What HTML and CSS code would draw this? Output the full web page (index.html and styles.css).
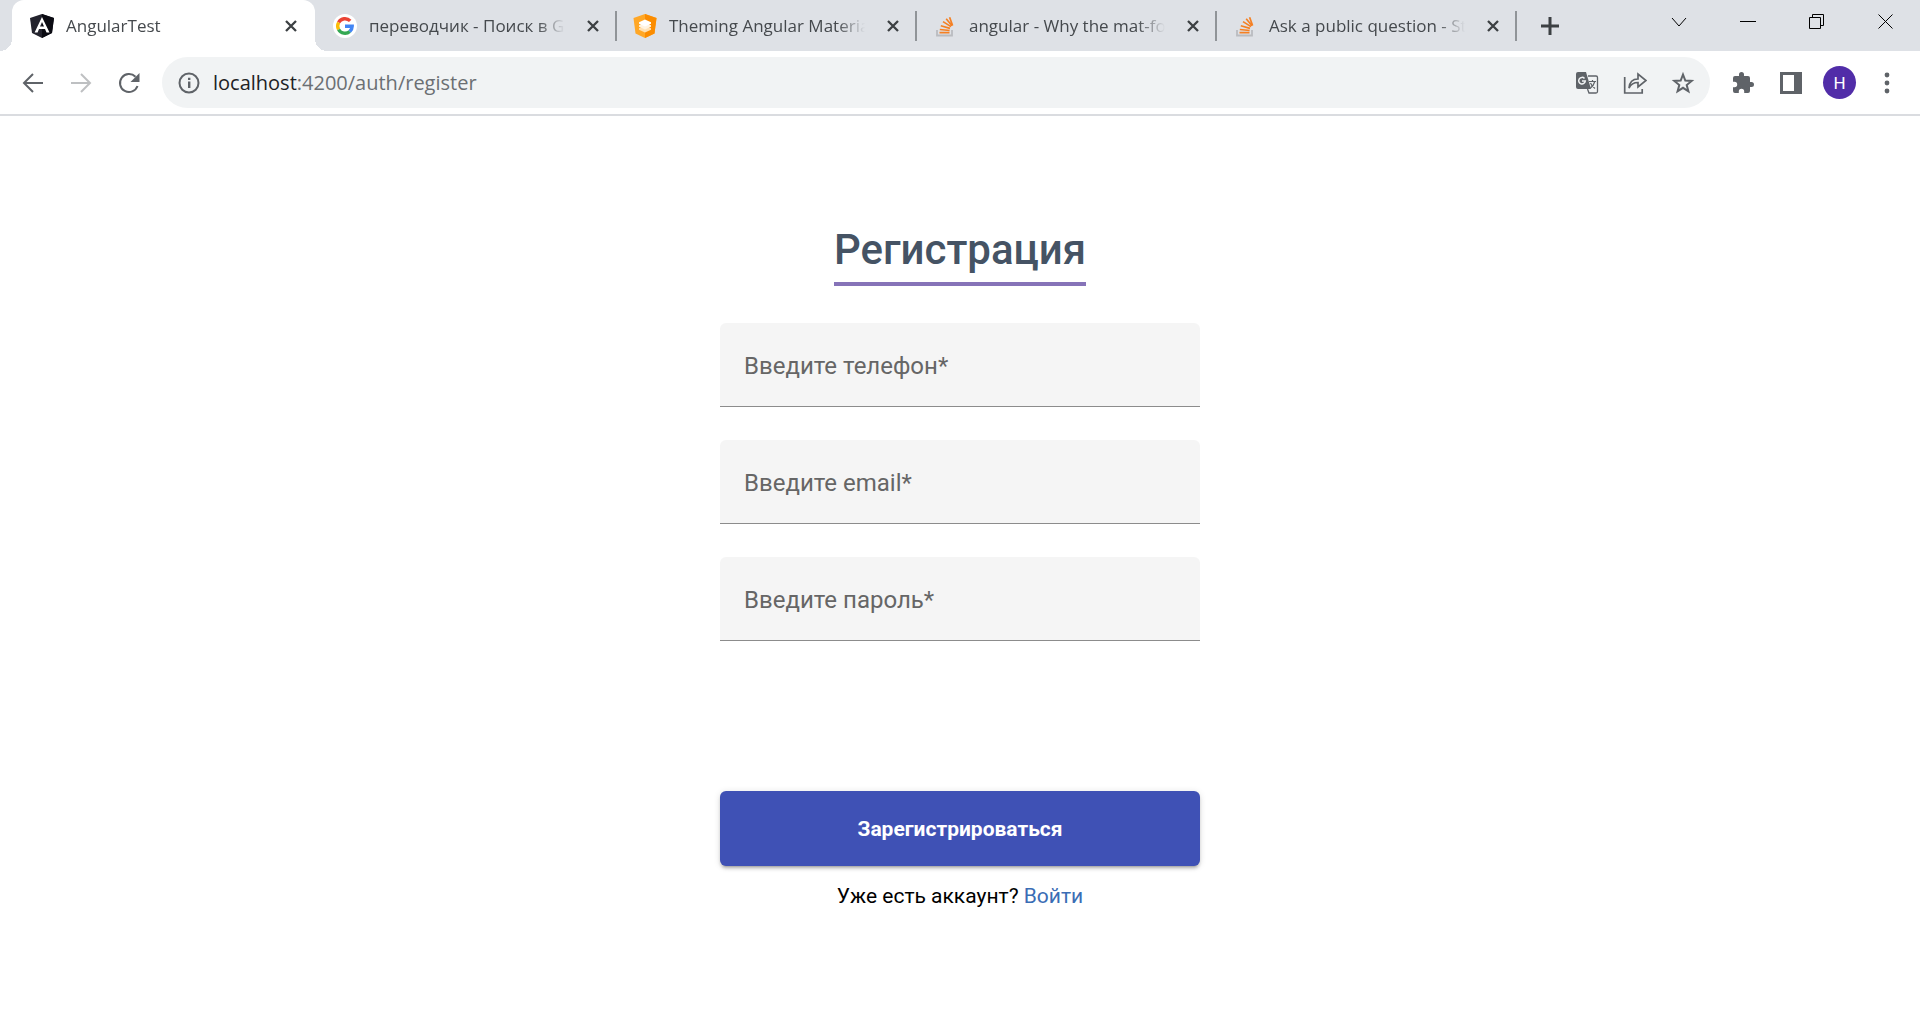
FILE: index.html
```html
<!DOCTYPE html>
<html lang="ru">
<head>
    <meta charset="utf-8">
    <title>AngularTest</title>
    <link rel="stylesheet" href="styles.css">
</head>
<body>
<svg class="sprite" aria-hidden="true">
    <symbol id="close" viewBox="0 0 12 12">
        <path d="M1 1l10 10M11 1L1 11" fill="none" stroke="#3c4043" stroke-width="2.3"/>
    </symbol>
    <symbol id="stack" viewBox="0 0 24 24">
        <path d="M4 16v5.500h15V16" fill="none" stroke="#babcc0" stroke-width="1.8"/>
        <path d="M6.500 18.700h10M6.800 15.500l9.800 1M7.800 11.700l9.200 2.700M10 7.600l8 5M13.200 4.800l5.800 7M16.600 3.200l3 8.400" fill="none" stroke="#f48024" stroke-width="1.7"/>
    </symbol>
</svg>

<header class="browser">
    <div class="tab-strip">
        <div class="tab active">
            <svg class="favicon" viewBox="0 0 24 24">
                <path d="M12 0l12 4-2 15-10 5-10-5L0 4z" fill="#23232d"/>
                <path d="M12 0l12 4-2 15-10 5z" fill="#0b0b12"/>
                <path d="M12 3L4.600 18.500h3l1.400-3.600h6l1.500 3.600h3zM12 8l2 4.600h-4z" fill="#fff" fill-rule="evenodd"/>
            </svg>
            <span class="tab-title">AngularTest</span>
            <button class="tab-close" aria-label="Закрыть"><svg><use href="#close"/></svg></button>
        </div>
        <div class="tab">
            <svg class="favicon" viewBox="0 0 24 24">
                <circle cx="12" cy="12" r="12" fill="#fff"/>
                <g fill="none" stroke-width="3.4">
                    <path d="M17.200 6.900A7.300 7.300 0 0 0 5.600 8.500" stroke="#ea4335"/>
                    <path d="M5.600 8.500a7.300 7.300 0 0 0 0 7" stroke="#fbbc05"/>
                    <path d="M5.600 15.500a7.300 7.300 0 0 0 11.200 2" stroke="#34a853"/>
                    <path d="M16.800 17.500a7.300 7.300 0 0 0 2.400-5.300H12" stroke="#4285f4"/>
                </g>
            </svg>
            <span class="tab-title">переводчик - Поиск в Google</span>
            <button class="tab-close" aria-label="Закрыть"><svg><use href="#close"/></svg></button>
        </div>
        <div class="tab">
            <svg class="favicon" viewBox="0 0 24 24">
                <path d="M12 0l11.500 4-2 15.500L12 24l-9.500-4.500L.5 4z" fill="#ffa726"/>
                <path d="M12 0l11.500 4-2 15.500L12 24z" fill="#fb8c00"/>
                <path d="M12 11.500l6 2.700v1.600L12 18.500l-6-2.700v-1.600z" fill="#ffe0b2"/>
                <path d="M12 8.500l6 2.700v1.600L12 15.500l-6-2.700v-1.600z" fill="#fff3e0"/>
                <path d="M12 5.500l6 2.700v1.600L12 12.500 6 9.800V8.200z" fill="#fff"/>
            </svg>
            <span class="tab-title">Theming Angular Material</span>
            <button class="tab-close" aria-label="Закрыть"><svg><use href="#close"/></svg></button>
        </div>
        <div class="tab">
            <svg class="favicon"><use href="#stack"/></svg>
            <span class="tab-title">angular - Why the mat-form-field</span>
            <button class="tab-close" aria-label="Закрыть"><svg><use href="#close"/></svg></button>
        </div>
        <div class="tab">
            <svg class="favicon"><use href="#stack"/></svg>
            <span class="tab-title">Ask a public question - Stack Overflow</span>
            <button class="tab-close" aria-label="Закрыть"><svg><use href="#close"/></svg></button>
        </div>
        <button class="new-tab" aria-label="Новая вкладка">
            <svg width="18" height="18" viewBox="0 0 18 18"><path d="M9 0v18M0 9h18" stroke="#3c4043" stroke-width="3"/></svg>
        </button>
        <div class="window-buttons">
            <button aria-label="Поиск вкладок"><svg viewBox="0 0 16 16"><path d="M1 4l7 8 7-8"/></svg></button>
            <button aria-label="Свернуть"><svg viewBox="0 0 16 16"><path d="M0 7.500h16"/></svg></button>
            <button aria-label="Восстановить"><svg viewBox="0 0 16 16"><path d="M.5 3.500h11v11H.5zM3.500 3.500v-3h11v11h-3"/></svg></button>
            <button aria-label="Закрыть окно"><svg viewBox="0 0 16 16"><path d="M.5.5l14 14M14.500.5l-14 14"/></svg></button>
        </div>
    </div>

    <div class="toolbar">
        <button class="tool" aria-label="Назад"><svg viewBox="0 0 24 24"><path class="line" d="M22 12H4M12 3l-9 9 9 9"/></svg></button>
        <button class="tool disabled" aria-label="Вперёд" disabled><svg viewBox="0 0 24 24"><path class="line" d="M2 12h18M12 3l9 9-9 9"/></svg></button>
        <button class="tool" aria-label="Обновить"><svg viewBox="0 0 24 24"><path class="line" d="M20.500 15A9 9 0 1 1 18.500 5.800"/><path d="M22.500 2v9h-9z"/></svg></button>
        <div class="address">
            <svg class="info" viewBox="0 0 24 24"><circle class="line" cx="12" cy="12" r="9.500"/><path d="M11 10.500h2.400V17H11zM11 6.700h2.400v2.400H11z"/></svg>
            <div class="url" role="textbox" aria-label="Адрес"><span>localhost</span>:4200/auth/register</div>
            <button class="tool" aria-label="Перевести">
                <svg viewBox="0 0 24 24">
                    <path d="M3 1h8l5 17H3a2 2 0 0 1-2-2V3a2 2 0 0 1 2-2z"/>
                    <path d="M13 5h8a1.500 1.500 0 0 1 1.500 1.500v14A1.500 1.500 0 0 1 21 22h-7l-1.500-4" fill="none" stroke="#5f6368" stroke-width="1.3"/>
                    <path d="M14 10.500h7M17.500 9v1.500M19.800 10.500c-.8 3-2.300 5-4.300 6.500M15.500 12c1 2.500 2.500 4 4.500 5.500" fill="none" stroke="#5f6368" stroke-width="1.2"/>
                    <path d="M9.500 7.500a3.300 3.300 0 1 0 .8 2.500H7" fill="none" stroke="#f1f3f4" stroke-width="1.5"/>
                </svg>
            </button>
            <button class="tool" aria-label="Поделиться"><svg viewBox="0 0 24 24"><path d="M1.700 6v16h17.500v-4M6 17c.5-6 3.500-9 9-9V3l8 6.500-8 6.500v-4.500c-4 0-7 1.500-9 5.500z" fill="none" stroke="#5f6368" stroke-width="1.7"/></svg></button>
            <button class="tool" aria-label="В закладки"><svg viewBox="0 0 24 24"><path class="line" d="M12 3.500l2.300 6 6.400.4-5 4.100 1.700 6.300-5.400-3.500-5.400 3.500L8.300 14l-5-4.100 6.400-.4z"/></svg></button>
        </div>
        <button class="tool" aria-label="Расширения"><svg viewBox="0 0 24 24"><path d="M20.500 11H19V7a2 2 0 0 0-2-2h-4V3.500a2.500 2.500 0 0 0-5 0V5H4a2 2 0 0 0-2 2v3.800h1.500a2.700 2.700 0 0 1 0 5.400H2V20a2 2 0 0 0 2 2h3.800v-1.500a2.700 2.700 0 0 1 5.400 0V22H17a2 2 0 0 0 2-2v-4h1.500a2.500 2.500 0 0 0 0-5z"/></svg></button>
        <button class="tool" aria-label="Боковая панель"><svg viewBox="0 0 24 24"><path d="M1 1h22v22H1zM4 4v16h11V4z" fill-rule="evenodd"/></svg></button>
        <button class="avatar" aria-label="Профиль">H</button>
        <button class="tool" aria-label="Меню"><svg viewBox="0 0 24 24"><circle cx="12" cy="4" r="2.4"/><circle cx="12" cy="12" r="2.4"/><circle cx="12" cy="20" r="2.4"/></svg></button>
    </div>
</header>

<main class="auth">
    <h1>Регистрация</h1>
    <form class="auth-form">
        <div class="field">
            <label for="phone">Введите телефон*</label>
            <input id="phone" type="tel" required>
        </div>
        <div class="field">
            <label for="email">Введите email*</label>
            <input id="email" type="email" required>
        </div>
        <div class="field">
            <label for="password">Введите пароль*</label>
            <input id="password" type="password" required>
        </div>
        <button class="submit" type="submit">Зарегистрироваться</button>
    </form>
    <p class="login">Уже есть аккаунт? <a href="#login">Войти</a></p>
</main>
</body>
</html>
```
FILE: styles.css
```css
* {
    margin: 0;
    padding: 0;
    box-sizing: border-box;
}

body {
    min-height: 100vh;
    background: #fff;
    font-family: Roboto, sans-serif;
    color: #000;
}

button {
    border: none;
    background: none;
    font-family: inherit;
    cursor: pointer;
}

.sprite {
    display: none;
}

.browser {
    font-family: "Open Sans", sans-serif;
    border-bottom: 2px solid #dadce0;
}

/* Tabs */
.tab-strip {
    display: flex;
    height: 51px;
    padding-left: 12px;
    background: #dee1e6;
}

.tab {
    position: relative;
    display: flex;
    align-items: center;
    gap: 12px;
    flex: 0 1 300px;
    min-width: 0;
    padding: 0 18px 0 16px;
}

.tab.active {
    flex-basis: 303px;
    margin-right: 2px;
    padding-left: 18px;
    border-radius: 12px 12px 0 0;
    background: #fff;
}

/* the curved feet of the open tab */
.tab.active::before,
.tab.active::after {
    content: "";
    position: absolute;
    bottom: 0;
    width: 12px;
    height: 12px;
}

.tab.active::before {
    right: 100%;
    background: radial-gradient(circle at 0 0, #dee1e6 12px, #fff 12px);
}

.tab.active::after {
    left: 100%;
    background: radial-gradient(circle at 100% 0, #dee1e6 12px, #fff 12px);
}

.tab:not(.active)::after {
    content: "";
    position: absolute;
    right: 0;
    top: 11px;
    width: 2px;
    height: 30px;
    background: #909498;
}

.favicon {
    flex: none;
    width: 24px;
    height: 24px;
}

.tab-title {
    flex: 1;
    overflow: hidden;
    white-space: nowrap;
    font-size: 17px;
    line-height: 24px;
    color: #45494d;
    -webkit-mask-image: linear-gradient(to right, #000 84%, transparent 98%);
    mask-image: linear-gradient(to right, #000 84%, transparent 98%);
}

.tab-close {
    display: flex;
    padding-left: 6px;
}

.tab-close svg {
    width: 12px;
    height: 12px;
}

.new-tab {
    display: flex;
    align-items: center;
    padding: 0 24px;
}

.window-buttons {
    display: flex;
    align-items: center;
    height: 44px;
    margin-left: auto;
}

.window-buttons button {
    display: flex;
    justify-content: center;
    width: 69px;
}

.window-buttons svg {
    width: 16px;
    height: 16px;
    fill: none;
    stroke: #000;
    stroke-width: 1;
}

/* Toolbar */
.toolbar {
    display: flex;
    align-items: center;
    height: 63px;
    padding: 0 9px;
}

.tool {
    display: flex;
    justify-content: center;
    align-items: center;
    flex: none;
    width: 48px;
    height: 48px;
}

.tool svg,
.info {
    width: 24px;
    height: 24px;
    fill: #5f6368;
}

.tool .line,
.info .line {
    fill: none;
    stroke: #5f6368;
    stroke-width: 2;
}

.disabled {
    opacity: 0.4;
}

.address {
    display: flex;
    align-items: center;
    flex: 1;
    height: 51px;
    margin: 0 9px;
    padding: 0 3px 0 15px;
    border-radius: 26px;
    background: #f1f3f4;
}

.url {
    flex: 1;
    margin-left: 12px;
    font-size: 20px;
    line-height: 28px;
    color: #6b6f73;
}

.url span {
    color: #202124;
}

.avatar {
    width: 33px;
    height: 33px;
    margin: 0 7px 0 8px;
    border-radius: 50%;
    background: #512da8;
    color: #fff;
    font-family: Roboto, sans-serif;
    font-size: 17px;
}

/* Registration form */
.auth {
    display: flex;
    flex-direction: column;
    align-items: center;
    padding: 110px 24px 24px;
}

.auth h1 {
    margin-bottom: 37px;
    padding-bottom: 8px;
    border-bottom: 4px solid #8673b8;
    font-size: 42px;
    font-weight: 500;
    line-height: 48px;
    color: #455364;
}

.auth-form {
    display: flex;
    flex-direction: column;
    gap: 33px;
    width: 100%;
    max-width: 480px;
}

.field {
    display: grid;
    height: 84px;
    border-bottom: 1px solid #8c8c8c;
    border-radius: 6px 6px 0 0;
    background: #f5f5f5;
}

/* the label lies over the empty input */
.field label,
.field input {
    grid-area: 1 / 1;
}

.field label {
    align-self: center;
    padding: 2px 24px 0;
    font-size: 24px;
    line-height: 36px;
    color: #666;
    pointer-events: none;
}

.field input {
    width: 100%;
    padding: 0 24px;
    border: none;
    outline: none;
    background: transparent;
    font-family: inherit;
    font-size: 24px;
}

.submit {
    height: 75px;
    margin-top: 117px;
    border-radius: 6px;
    background: #3f51b5;
    box-shadow:
            0 4px 2px -3px rgba(0, 0, 0, 0.2),
            0 3px 3px rgba(0, 0, 0, 0.14),
            0 1px 7px rgba(0, 0, 0, 0.12);
    color: #fff;
    font-size: 21px;
    font-weight: 700;
}

.login {
    margin-top: 18px;
    font-size: 21px;
    line-height: 24px;
}

.login a {
    color: #3a6db5;
    text-decoration: none;
}
```
